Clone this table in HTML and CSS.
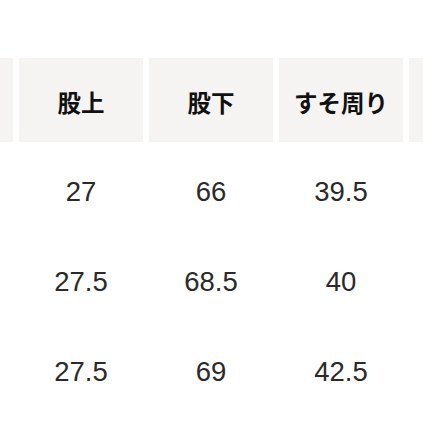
FILE: index.html
```html
<!DOCTYPE html>
<html lang="ja">
<head>
<meta charset="utf-8">
<link rel="stylesheet" href="styles.css">
</head>
<body>
<div class="table">
  <div class="row head">
    <div class="cell"></div>
    <div class="cell">股上</div>
    <div class="cell">股下</div>
    <div class="cell">すそ周り</div>
    <div class="cell"></div>
  </div>
  <div class="row data">
    <div class="cell"></div>
    <div class="cell">27</div>
    <div class="cell">66</div>
    <div class="cell">39.5</div>
    <div class="cell"></div>
  </div>
  <div class="row data">
    <div class="cell"></div>
    <div class="cell">27.5</div>
    <div class="cell">68.5</div>
    <div class="cell">40</div>
    <div class="cell"></div>
  </div>
  <div class="row data">
    <div class="cell"></div>
    <div class="cell">27.5</div>
    <div class="cell">69</div>
    <div class="cell">42.5</div>
    <div class="cell"></div>
  </div>
</div>
</body>
</html>
```
FILE: styles.css
```css
html, body {
  margin: 0;
  padding: 0;
  background: #ffffff;
  overflow: hidden;
}
.table {
  padding-top: 58px;
  margin-left: -111px;
  width: 700px;
}
.row {
  display: flex;
  gap: 6px;
}
.cell {
  width: 124px;
  flex: 0 0 124px;
  display: flex;
  align-items: center;
  justify-content: center;
}
.head {
  margin-bottom: 5px;
}
.head .cell {
  height: 84px;
  background: #f5f4f2;
  font-family: "Noto Sans CJK JP", sans-serif;
  font-weight: 700;
  font-size: 23.5px;
  color: #111111;
  padding-top: 3px;
  box-sizing: border-box;
}
.data .cell {
  height: 90px;
  font-family: "Liberation Sans", Arial, sans-serif;
  font-size: 27.5px;
  color: #2a2a2a;
}
```
